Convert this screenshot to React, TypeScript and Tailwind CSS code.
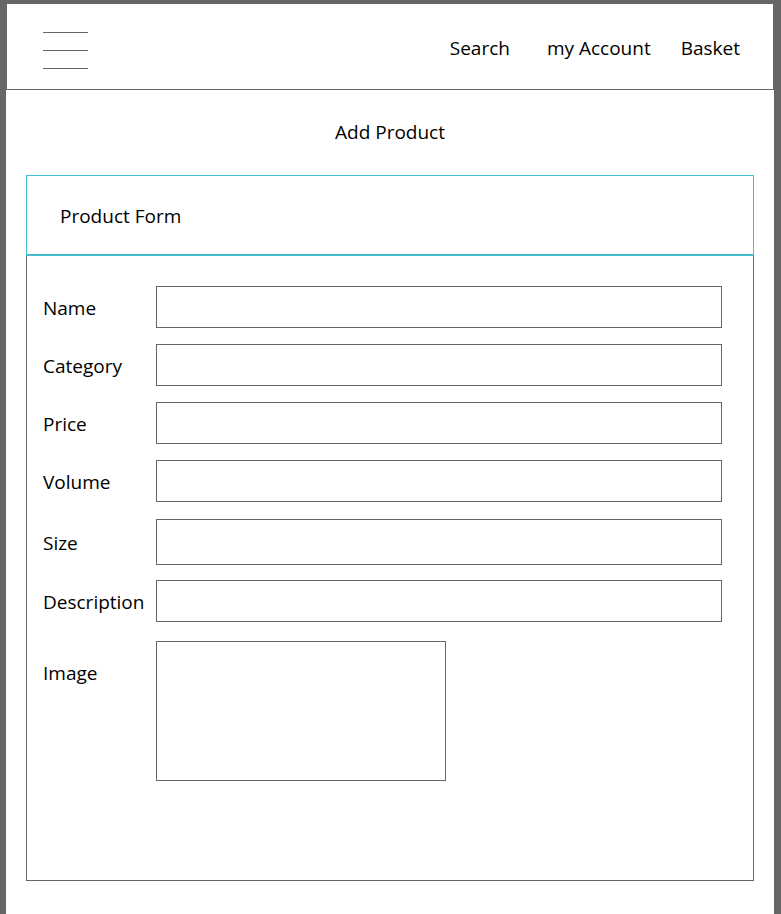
const fields = [
  { label: "Name", h: "h-[42px]", mt: "mt-0" },
  { label: "Category", h: "h-[42px]", mt: "mt-4" },
  { label: "Price", h: "h-[42px]", mt: "mt-4" },
  { label: "Volume", h: "h-[42px]", mt: "mt-4" },
  { label: "Size", h: "h-[46px]", mt: "mt-[17px]" },
  { label: "Description", h: "h-[42px]", mt: "mt-[15px]" },
];

function Hamburger() {
  return (
    <div className="mt-[28px] ml-[36px] flex w-[45px] flex-col gap-[17px]">
      <span className="h-px bg-[#666]" />
      <span className="h-px bg-[#666]" />
      <span className="h-px bg-[#666]" />
    </div>
  );
}

function Header() {
  return (
    <header className="flex h-[86px] justify-between border-x border-b border-[#666]">
      <Hamburger />
      <nav className="flex items-center pr-[33px] pt-[3px] text-[19px]">
        <a>Search</a>
        <a className="ml-[37px]">my Account</a>
        <a className="ml-[30px]">Basket</a>
      </nav>
    </header>
  );
}

export default function App() {
  return (
    <div
      className="min-h-[914px] bg-[#666] pt-1 pl-1.5 pr-[7px] text-black"
      style={{ fontFamily: '"Open Sans", "Noto Sans", sans-serif' }}
    >
      <div className="min-h-[910px] bg-white">
        <Header />
        <h1 className="mt-[30px] text-center text-[19px] leading-6">Add Product</h1>

        <div className="mx-5 mt-[31px]">
          <div className="flex h-[81px] items-center border border-b-2 border-[#45bccc] pl-[33px] pt-0.5 text-[19px]">
            Product Form
          </div>
          <div className="border-x border-b border-[#666] pt-[30px] pr-[31px] pb-[99px] pl-4 text-[19px]">
            {fields.map((f) => (
              <div key={f.label} className={`flex items-center ${f.mt}`}>
                <label className="w-[113px] shrink-0 pt-0.5 leading-6">{f.label}</label>
                <input className={`${f.h} flex-1 border border-[#666] outline-none`} />
              </div>
            ))}
            <div className="mt-[19px] flex items-start">
              <label className="mt-[18px] w-[113px] shrink-0 pt-0.5 leading-6">Image</label>
              <div className="h-[140px] w-[290px] border border-[#666]" />
            </div>
          </div>
        </div>
      </div>
    </div>
  );
}
